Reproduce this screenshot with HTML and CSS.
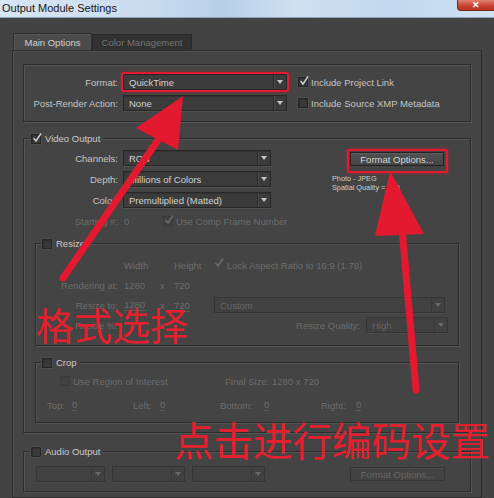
FILE: index.html
```html
<!DOCTYPE html>
<html>
<head>
<meta charset="utf-8">
<link rel="stylesheet" href="styles.css">
</head>
<body>
<div class="titlebar">
  <span class="title">Output Module Settings</span>
  <span class="close">✕</span>
</div>
<div class="window">
  <div class="tabs">
    <div class="tab active">Main Options</div>
    <div class="tab inactive">Color Management</div>
  </div>
  <div class="panel">
    <div class="box">
      <div class="row">
        <span class="lbl">Format:</span>
        <div class="sel w164 hl"><span class="val">QuickTime</span><span class="arr"></span></div>
        <span class="cb on top-cb"><svg viewBox="0 0 10 10" width="10" height="10"><path d="M1.5 5 L4 8 L9 0.5" fill="none" stroke="#d0d0d0" stroke-width="1.4"/></svg></span>
        <span class="cbt">Include Project Link</span>
      </div>
      <div class="row">
        <span class="lbl">Post-Render Action:</span>
        <div class="sel w164"><span class="val">None</span><span class="arr"></span></div>
        <span class="cb top-cb"></span>
        <span class="cbt">Include Source XMP Metadata</span>
      </div>
    </div>

    <div class="group video">
      <div class="legend">
        <span class="cb on"><svg viewBox="0 0 10 10" width="10" height="10"><path d="M1.5 5 L4 8 L9 0.5" fill="none" stroke="#d0d0d0" stroke-width="1.4"/></svg></span>
        <span class="lgt">Video Output</span>
      </div>
      <div class="vbody">
        <div class="vleft">
          <div class="row"><span class="lbl">Channels:</span><div class="sel w148"><span class="val">RGB</span><span class="arr"></span></div></div>
          <div class="row"><span class="lbl">Depth:</span><div class="sel w148"><span class="val">Millions of Colors</span><span class="arr"></span></div></div>
          <div class="row"><span class="lbl">Color:</span><div class="sel w148"><span class="val">Premultiplied (Matted)</span><span class="arr"></span></div></div>
          <div class="row dim">
            <span class="lbl">Starting #:</span>
            <span class="start-val">0</span>
            <span class="cb dis"><svg viewBox="0 0 10 10" width="10" height="10"><path d="M1.5 5 L4 8 L9 0.5" fill="none" stroke="#6c6c6c" stroke-width="1.4"/></svg></span>
            <span class="cbt">Use Comp Frame Number</span>
          </div>
        </div>
        <div class="vright">
          <div class="hlwrap"><div class="btn">Format Options...</div></div>
          <div class="info">Photo - JPEG<br>Spatial Quality = 100</div>
        </div>
      </div>

      <div class="group sub resize">
        <div class="legend sublegend">
          <span class="cb"></span>
          <span class="lgt">Resize</span>
        </div>
        <div class="rrows dim">
          <div class="rrow">
            <span class="c-lbl"></span><span class="c-v1">Width</span><span class="c-x"></span><span class="c-v2">Height</span>
            <span class="cb dis nobox"><svg viewBox="0 0 10 10" width="10" height="10"><path d="M1.5 5 L4 8 L9 0.5" fill="none" stroke="#6c6c6c" stroke-width="1.6"/></svg></span>
            <span class="cbt">Lock Aspect Ratio to 16:9 (1.78)</span>
          </div>
          <div class="rrow">
            <span class="c-lbl">Rendering at:</span><span class="c-v1">1280</span><span class="c-x">x</span><span class="c-v2">720</span>
          </div>
          <div class="rrow">
            <span class="c-lbl">Resize to:</span><span class="c-v1 und">1280</span><span class="c-x">x</span><span class="c-v2"><span class="und">720</span></span>
            <div class="sel dis w231"><span class="val">Custom</span><span class="arr"></span></div>
          </div>
          <div class="rrow">
            <span class="c-lbl">Resize %:</span><span class="c-v1"></span><span class="c-x">x</span><span class="c-v2"></span>
            <span class="q-lbl">Resize Quality:</span>
            <div class="sel dis w82"><span class="val">High</span><span class="arr"></span></div>
          </div>
        </div>
      </div>

      <div class="group sub crop">
        <div class="legend sublegend">
          <span class="cb"></span>
          <span class="lgt">Crop</span>
        </div>
        <div class="crows dim">
          <div class="rrow">
            <span class="roi"><span class="cb dis"></span><span class="cbt">Use Region of Interest</span></span>
            <span>Final Size: 1280 x 720</span>
          </div>
          <div class="rrow">
            <span class="cc c-top"><span class="cl w25">Top:</span><span class="und">0</span></span>
            <span class="cc c-left"><span class="cl w27">Left:</span><span class="und">0</span></span>
            <span class="cc c-bottom"><span class="cl w44">Bottom:</span><span class="und">0</span></span>
            <span class="cc c-right"><span class="cl w35">Right:</span><span class="und">0</span></span>
          </div>
        </div>
      </div>
    </div>

    <div class="group audio">
      <div class="legend">
        <span class="cb"></span>
        <span class="lgt">Audio Output</span>
      </div>
      <div class="arow">
        <div class="sel dis w69"><span class="val"></span><span class="arr"></span></div>
        <div class="sel dis w73"><span class="val"></span><span class="arr"></span></div>
        <div class="sel dis w73"><span class="val"></span><span class="arr"></span></div>
        <div class="btn dis abtn">Format Options...</div>
      </div>
    </div>
  </div>
</div>

<div class="overlay">
  <svg class="arrows" viewBox="0 0 494 498" width="494" height="498">
    <line x1="63" y1="278" x2="158" y2="140" stroke="#e3192f" stroke-width="7" stroke-linecap="round"/>
    <polygon points="183,96 136,128 178,150" fill="#e3192f"/>
    <line x1="416" y1="390" x2="402" y2="228" stroke="#e3192f" stroke-width="7" stroke-linecap="round"/>
    <polygon points="390,171 375,236 424,234" fill="#e3192f"/>
  </svg>
  <div class="cn cn1">格式选择</div>
  <div class="cn cn2">点击进行编码设置</div>
</div>
</body>
</html>
```

FILE: styles.css
```css
* { box-sizing: border-box; }
html, body { margin: 0; padding: 0; }
body {
  width: 494px;
  height: 498px;
  overflow: hidden;
  position: relative;
  background: #434343;
  font-family: "Liberation Sans", Arial, sans-serif;
  font-size: 9.5px;
  color: #c4c4c4;
}

/* title bar */
.titlebar {
  height: 18px;
  display: flex;
  align-items: flex-start;
  background: linear-gradient(to right, #d7e5f3 0%, #c9dcef 30%, #b7cfe7 45%, #cfe0f1 60%, #c2d8ee 80%, #d0e2f3 100%);
  border-bottom: 1px solid #8aa2bb;
}
.title {
  font-size: 11px;
  color: #151515;
  padding-left: 2px;
  line-height: 16px;
}
.close {
  margin-left: auto;
  width: 37px;
  height: 11px;
  background: linear-gradient(#e08270, #c7412f 60%, #b83424);
  border: 1px solid #7a2418;
  border-top: none;
  border-right: none;
  border-radius: 0 0 0 4px;
  color: #fff;
  font-size: 9px;
  line-height: 10px;
  text-align: center;
  font-weight: bold;
}

/* window */
.window {
  height: 480px;
  display: flex;
  flex-direction: column;
  padding-top: 15px;
  padding-left: 12px;
}
.tabs {
  display: flex;
  height: 17px;
  margin-left: 1px;
}
.tab {
  display: flex;
  align-items: center;
  justify-content: center;
  font-size: 9.5px;
}
.tab.active {
  width: 79px;
  background: #4b4b4b;
  color: #cfcfcf;
  border: 1px solid #2e2e2e;
  border-bottom: none;
  box-shadow: inset 1px 1px 0 #5a5a5a;
}
.tab.inactive {
  width: 100px;
  background: #313131;
  color: #747474;
  border: 1px solid #2a2a2a;
  border-bottom: none;
  margin-top: 1px;
}
.panel {
  width: 470px;
  flex: 1;
  border: 1px solid #2c2c2c;
  box-shadow: inset 1px 1px 0 #525252;
  padding: 13px 10px 0 10px;
  background: #444444;
}

/* boxes & groups */
.box, .group {
  border: 1px solid #2d2d2d;
  box-shadow: inset 1px 1px 0 #545454, 1px 1px 0 #545454;
}
.box {
  height: 58px;
  padding-top: 9px;
  display: flex;
  flex-direction: column;
  gap: 5px;
}
.row {
  display: flex;
  align-items: center;
  height: 16px;
  white-space: nowrap;
}
.lbl {
  width: 94px;
  text-align: right;
  margin-right: 5px;
  flex: none;
}

/* select */
.sel {
  height: 16px;
  flex: none;
  display: flex;
  align-items: center;
  background: #3b3b3b;
  border: 1px solid #272727;
  box-shadow: inset 0 1px 0 #333, 0 1px 0 #505050;
  color: #d2d2d2;
}
.sel .val {
  flex: 1;
  padding-left: 5px;
  overflow: hidden;
  white-space: nowrap;
}
.sel .arr {
  width: 13px;
  height: 100%;
  border-left: 1px solid #2c2c2c;
  box-shadow: inset 1px 0 0 #484848;
  display: flex;
  align-items: center;
  justify-content: center;
}
.sel .arr::after {
  content: "";
  border-left: 3px solid transparent;
  border-right: 3px solid transparent;
  border-top: 4px solid #c4c4c4;
}
.sel.dis {
  background: #414141;
  border-color: #353535;
  color: #666;
  box-shadow: 0 1px 0 #4a4a4a;
}
.sel.dis .arr { border-left-color: #383838; box-shadow: none; }
.sel.dis .arr::after { border-top-color: #6a6a6a; }
.w164 { width: 164px; }
.w148 { width: 148px; }
.w231 { width: 231px; }
.w82 { width: 82px; }
.w69 { width: 69px; }
.w73 { width: 73px; }

.hl {
  outline: 2.5px solid #e3192f;
  outline-offset: 0.5px;
  border-radius: 1px;
  box-shadow: 0 0 4px 2px rgba(227, 25, 47, 0.35);
}

/* checkbox */
.cb {
  width: 10px;
  height: 10px;
  flex: none;
  border: 1px solid #262626;
  background: #383838;
  box-shadow: inset 1px 1px 0 #2f2f2f, 0 0 0 1px #4d4d4d;
  position: relative;
  display: block;
}
.cb svg {
  display: block;
  margin: -2px 0 0 0;
}
.cb.dis {
  border-color: #3a3a3a;
  background: #414141;
  box-shadow: none;
}
.cb.nobox { border: none; background: transparent; }
.cbt { margin-left: 3px; }
.top-cb { margin-left: 11px; }

/* legends */
.legend {
  display: flex;
  align-items: center;
  height: 11px;
  margin-top: -6px;
  margin-left: 6px;
  padding: 0 3px 0 1px;
  width: max-content;
  background: #444444;
  color: #cacaca;
}
.legend .lgt { margin-left: 4px; }

.group.video { margin-top: 16px; padding-bottom: 9px; }
.vbody { display: flex; margin-top: 6px; }
.vleft {
  width: 308px;
  display: flex;
  flex-direction: column;
  gap: 5px;
}
.dim { color: #6c6c6c; }
.start-val { margin-left: 1px; width: 39px; }

.vright { display: flex; flex-direction: column; }
.hlwrap {
  margin-top: -1px;
  margin-left: 15px;
  width: max-content;
  border: 2px solid #e3192f;
  border-radius: 2px;
  padding: 1px 2px 5px 1px;
  box-shadow: 0 0 3px 1px rgba(227, 25, 47, 0.35);
}
.btn {
  width: 94px;
  height: 14px;
  display: flex;
  align-items: center;
  justify-content: center;
  background: linear-gradient(#525252, #444);
  border: 1px solid #222;
  box-shadow: inset 0 1px 0 #5e5e5e;
  color: #d6d6d6;
  font-size: 9.5px;
  white-space: nowrap;
}
.btn.dis {
  background: #434343;
  border-color: #363636;
  box-shadow: inset 0 1px 0 #4b4b4b;
  color: #666;
}
.info {
  margin-top: 1px;
  font-size: 7.3px;
  line-height: 9px;
  color: #cfcfcf;
}

/* sub groups */
.group.sub { margin-left: 11px; margin-right: 11px; }
.group.resize { margin-top: 14px; padding-bottom: 12px; }
.sublegend { margin-left: 5px; }
.rrows {
  margin-top: 8px;
  display: flex;
  flex-direction: column;
  gap: 4px;
}
.rrow {
  display: flex;
  align-items: center;
  height: 16px;
  white-space: nowrap;
}
.c-lbl { width: 82px; text-align: right; flex: none; }
.c-v1 { width: 36px; margin-left: 6px; flex: none; }
.c-x { width: 14px; flex: none; }
.c-v2 { width: 40px; flex: none; }
.c-v1.und { width: 22px; margin-right: 14px; }
.und {
  border-bottom: 1px solid #5c5c5c;
  line-height: 10px;
}
.q-lbl { width: 146px; text-align: right; margin-right: 6px; }

.group.crop { margin-top: 16px; padding-bottom: 9px; }
.crows {
  margin-top: 5px;
  display: flex;
  flex-direction: column;
  gap: 8px;
}
.roi {
  display: flex;
  align-items: center;
  width: 189px;
  padding-left: 24px;
}
.cc { display: flex; align-items: center; flex: none; }
.c-top { width: 97px; padding-left: 11px; }
.c-left { width: 87px; }
.c-bottom { width: 101px; }
.cl { flex: none; }
.w25 { width: 25px; }
.w27 { width: 27px; }
.w44 { width: 44px; }
.w35 { width: 35px; }

/* audio */
.group.audio { margin-top: 18px; padding-bottom: 9px; }
.arow {
  display: flex;
  align-items: center;
  margin-top: 9px;
  margin-left: 12px;
  height: 16px;
}
.arow .sel + .sel { margin-left: 7px; }
.abtn { margin-left: 85px; width: 95px; }

/* annotation overlay */
.overlay {
  position: absolute;
  left: 0;
  top: 0;
  width: 494px;
  height: 498px;
  pointer-events: none;
}
.arrows { position: absolute; left: 0; top: 0; }
.cn {
  position: absolute;
  font-family: "Noto Sans CJK SC", sans-serif;
  color: #e4202e;
  font-weight: 400;
  white-space: nowrap;
}
.cn1 {
  left: 36px;
  top: 302px;
  font-size: 38px;
  line-height: 44px;
}
.cn2 {
  left: 174px;
  top: 416px;
  font-size: 39.5px;
  line-height: 46px;
}
```
